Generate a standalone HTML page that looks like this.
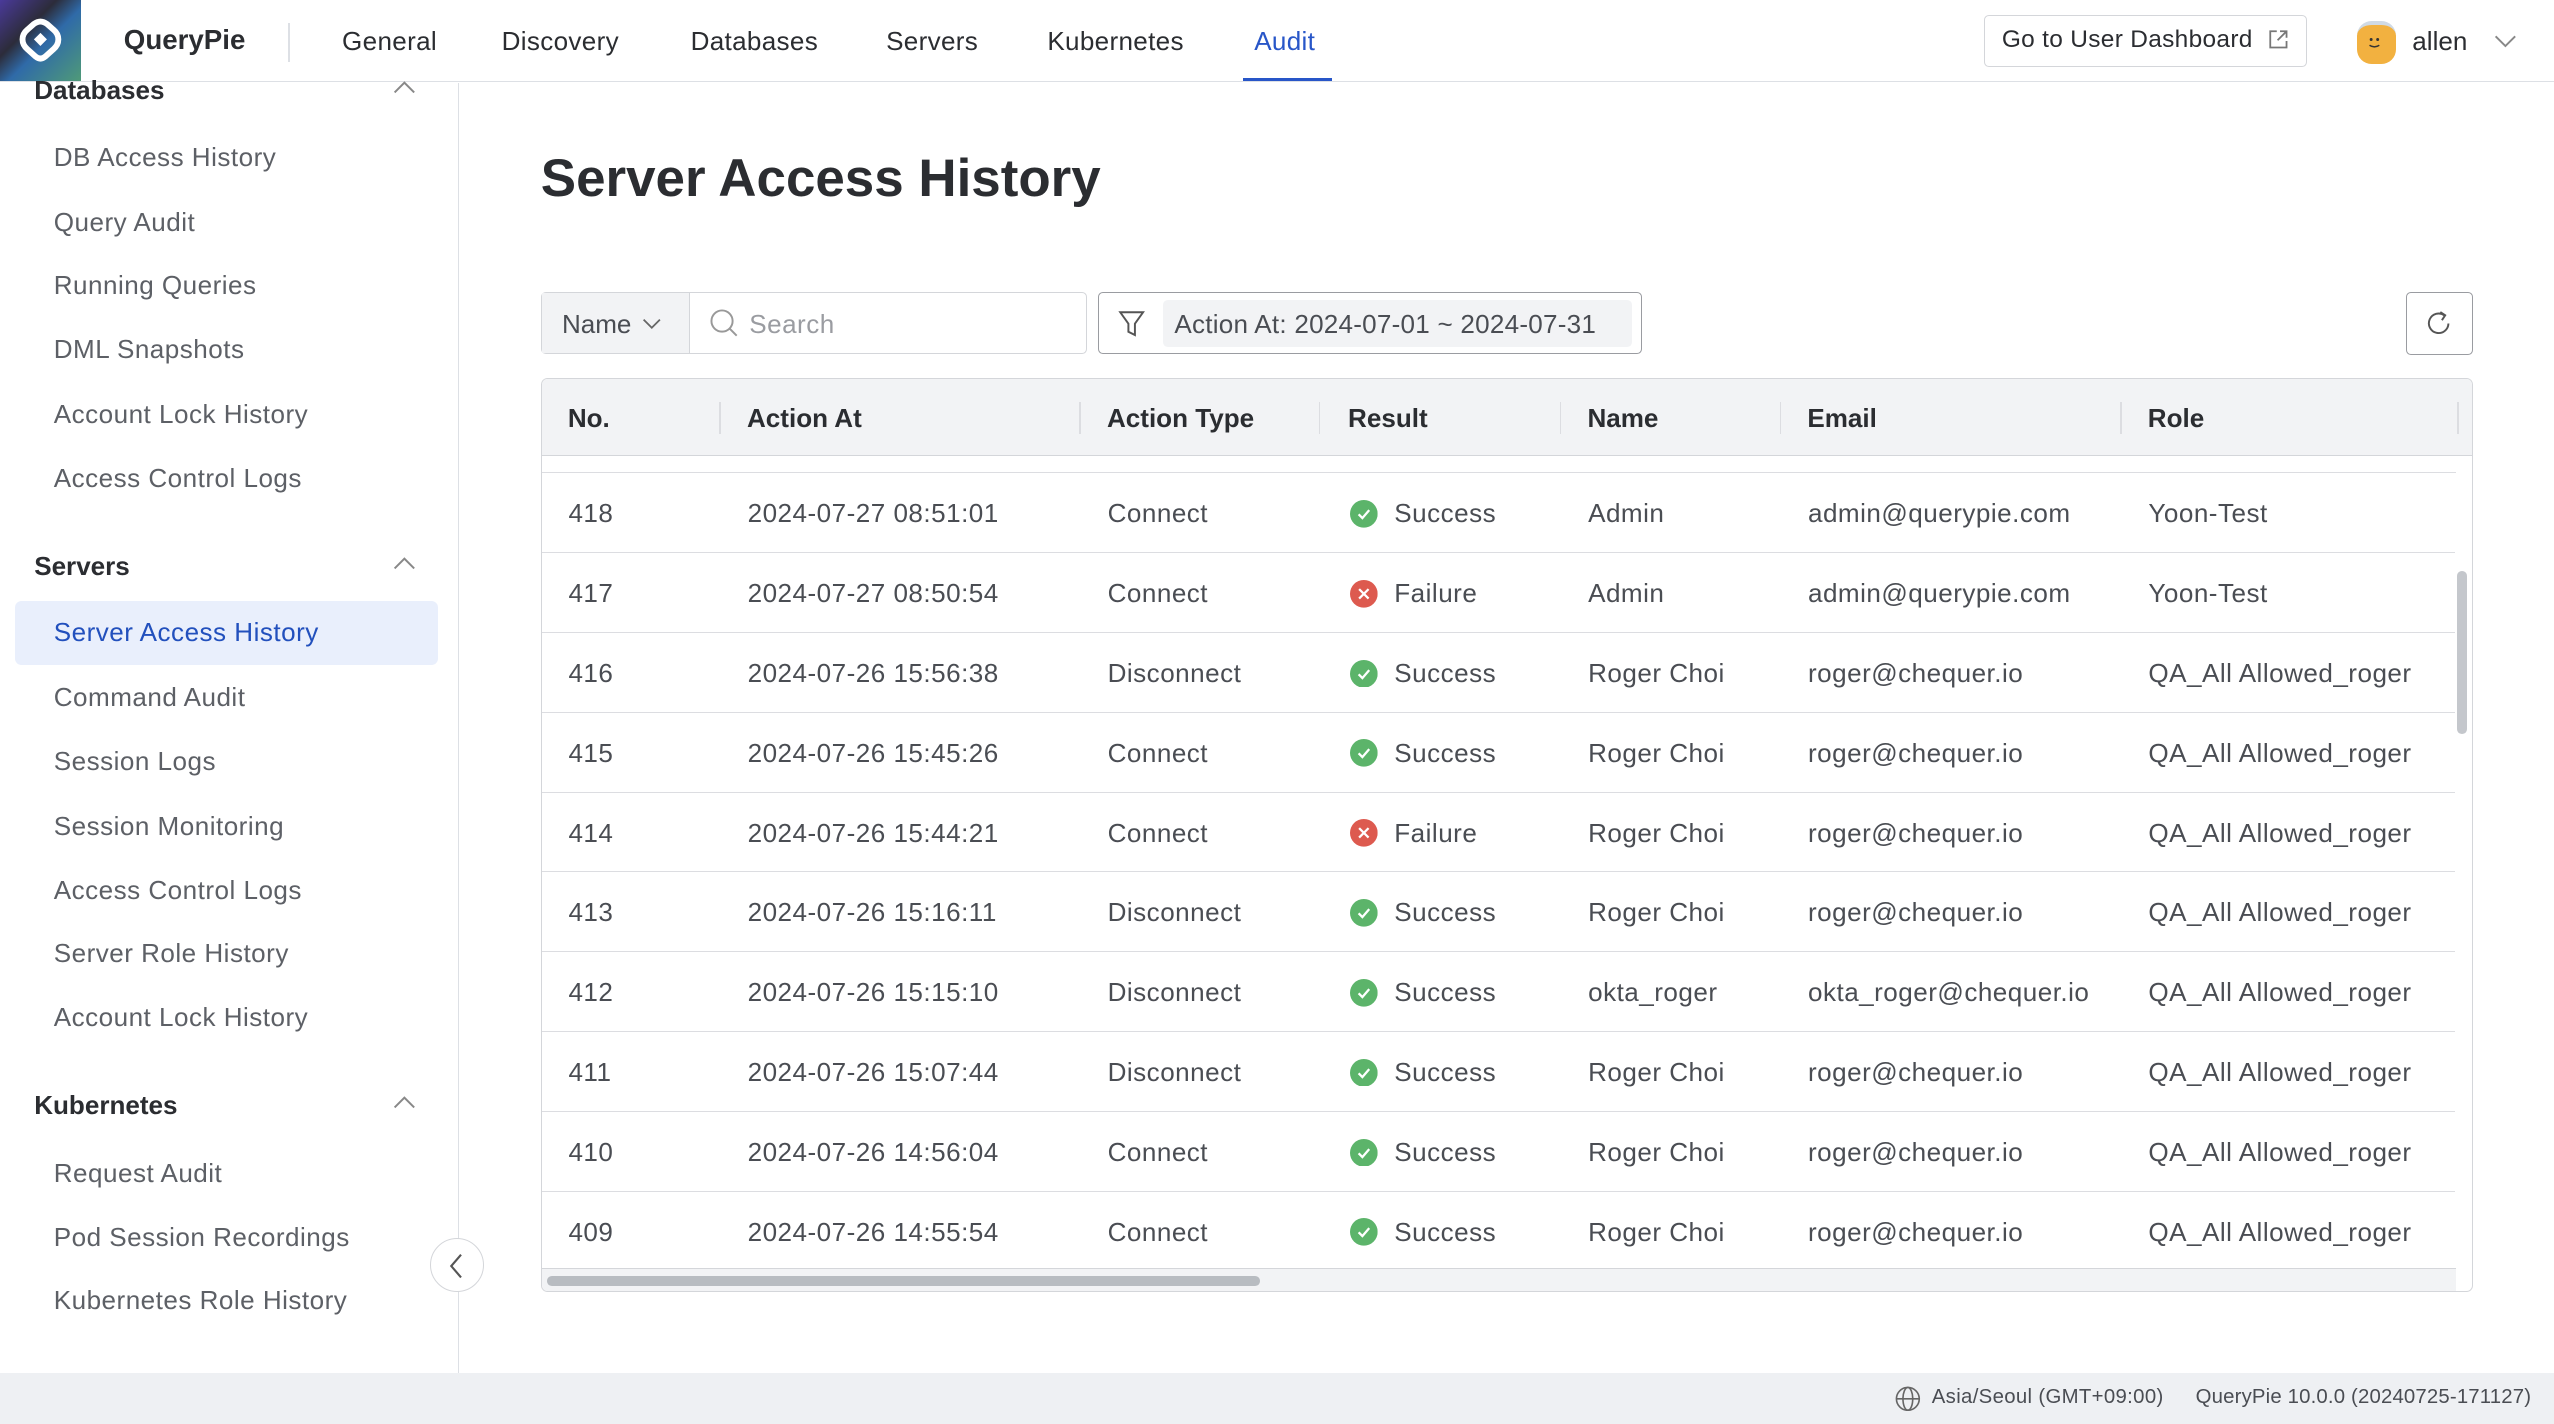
<!DOCTYPE html>
<html><head><meta charset="utf-8">
<style>
html,body{margin:0;padding:0;background:#fff;overflow:hidden}
#w{position:relative;width:1568px;height:874px;zoom:1.62883;font-family:"Liberation Sans",sans-serif;color:#2b2d31;overflow:hidden}
.a{position:absolute;white-space:nowrap}
.nav{top:16px;font-size:16px;color:#2b2d31;letter-spacing:0.2px}
.side{left:33px;font-size:16px;color:#5d6066;letter-spacing:0.3px}
.sh{left:21px;font-size:16px;font-weight:bold;color:#2b2d31}
.row{position:absolute;left:333px;width:1174px;height:48px;border-bottom:1px solid #dcdde1;font-size:16px;color:#4a4d53;letter-spacing:0.3px}
.row span{position:absolute;top:15px;white-space:nowrap}
.ic{position:absolute;top:16px;left:496px;width:17px;height:17px}
.th{position:absolute;top:15px;font-size:16px;font-weight:bold;color:#2b2d31}
.sep{position:absolute;top:14px;width:1px;height:20px;background:#dcdde1}
</style></head><body><div id="w">
<svg width="0" height="0" style="position:absolute"><defs>
<symbol id="ok" viewBox="0 0 17 17"><circle cx="8.5" cy="8.5" r="8.5" fill="#5cb46a"/><path d="M5.3 8.8L7.6 11.1L11.8 6.2" fill="none" stroke="#fff" stroke-width="1.4"/></symbol>
<symbol id="bad" viewBox="0 0 17 17"><circle cx="8.5" cy="8.5" r="8.5" fill="#dd5a4f"/><path d="M5.6 5.6L11.4 11.4M11.4 5.6L5.6 11.4" stroke="#fff" stroke-width="1.4"/></symbol>
</defs></svg>
<!-- header -->
<div class="a" style="left:0;top:0;width:1568px;height:50px;border-bottom:1px solid #dde0e5;background:#fff"></div>
<div class="a" style="left:0;top:0;width:50px;height:50px;background:linear-gradient(135deg,#4a3a9a 0%,#2c2c3a 35%,#2f6aa8 55%,#4f9a78 100%)"></div>
<svg class="a" style="left:10px;top:9px" width="30" height="32" viewBox="0 0 30 32"><path d="M15 4 Q17 4 19 5.5 L23 9 Q26 11.5 26 15 Q26 18.5 23 21 L18 25.5 Q15 28 12 25.5 L7 21 Q4 18.5 4 15 Q4 11.5 7 9 L11 5.5 Q13 4 15 4 Z" fill="none" stroke="#fff" stroke-width="3.6"/><path d="M15 11 L19 15 L15 19 L11 15 Z" fill="#fff"/></svg>
<div class="a" style="left:76px;top:15px;font-size:17px;font-weight:bold">QueryPie</div>
<div class="a" style="left:177px;top:14px;width:1px;height:24px;background:#dde0e5"></div>
<div class="a nav" style="left:210px">General</div>
<div class="a nav" style="left:308px">Discovery</div>
<div class="a nav" style="left:424px">Databases</div>
<div class="a nav" style="left:544px">Servers</div>
<div class="a nav" style="left:643px">Kubernetes</div>
<div class="a nav" style="left:770px;color:#2856c8">Audit</div>
<div class="a" style="left:763px;top:48px;width:55px;height:2px;background:#2856c8"></div>
<div class="a" style="left:1218px;top:9px;width:197px;height:31px;border:1px solid #d4d6da;border-radius:3px"></div>
<div class="a" style="left:1229px;top:16px;font-size:15px;color:#2b2d31;letter-spacing:0.2px">Go to User Dashboard</div>
<svg class="a" style="left:1392px;top:17px" width="14" height="14" viewBox="0 0 14 14"><path d="M6 2H2V12H12V8M8 2H12V6M12 2L6.5 7.5" fill="none" stroke="#777" stroke-width="1.1"/></svg>
<div class="a" style="left:1447px;top:13px;width:24px;height:26px;border-radius:9px;background:#f2b140;border-top:3px solid #d0dae5;box-sizing:border-box"></div>
<svg class="a" style="left:1451px;top:20px" width="14" height="12"><circle cx="5" cy="4" r="0.9" fill="#333"/><circle cx="9" cy="4" r="0.9" fill="#333"/><path d="M4 7.5Q7 9.5 10 7.5" fill="none" stroke="#333" stroke-width="0.9"/></svg>
<div class="a" style="left:1481px;top:16px;font-size:16px">allen</div>
<svg class="a" style="left:1531px;top:20px" width="14" height="10" viewBox="0 0 14 10"><path d="M1 2L7 8L13 2" fill="none" stroke="#888" stroke-width="1.2"/></svg>
<!-- sidebar -->
<div class="a" style="left:281px;top:51px;width:1px;height:792px;background:#dde0e5"></div>
<div class="a sh" style="top:46px">Databases</div>
<svg class="a" style="left:241px;top:50px" width="14" height="9"><path d="M1 7L7 1L13 7" fill="none" stroke="#888" stroke-width="1.2"/></svg>
<div class="a side" style="top:87px">DB Access History</div>
<div class="a side" style="top:127px">Query Audit</div>
<div class="a side" style="top:166px">Running Queries</div>
<div class="a side" style="top:205px">DML Snapshots</div>
<div class="a side" style="top:245px">Account Lock History</div>
<div class="a side" style="top:284px">Access Control Logs</div>
<div class="a sh" style="top:338px">Servers</div>
<svg class="a" style="left:241px;top:342px" width="14" height="9"><path d="M1 7L7 1L13 7" fill="none" stroke="#888" stroke-width="1.2"/></svg>
<div class="a" style="left:9px;top:369px;width:260px;height:39px;border-radius:4px;background:#e9effc"></div>
<div class="a side" style="top:379px;color:#2250bd">Server Access History</div>
<div class="a side" style="top:419px">Command Audit</div>
<div class="a side" style="top:458px">Session Logs</div>
<div class="a side" style="top:498px">Session Monitoring</div>
<div class="a side" style="top:537px">Access Control Logs</div>
<div class="a side" style="top:576px">Server Role History</div>
<div class="a side" style="top:615px">Account Lock History</div>
<div class="a sh" style="top:669px">Kubernetes</div>
<svg class="a" style="left:241px;top:673px" width="14" height="9"><path d="M1 7L7 1L13 7" fill="none" stroke="#888" stroke-width="1.2"/></svg>
<div class="a side" style="top:711px">Request Audit</div>
<div class="a side" style="top:750px">Pod Session Recordings</div>
<div class="a side" style="top:789px">Kubernetes Role History</div>
<div class="a" style="left:264px;top:760px;width:32px;height:32px;border-radius:50%;border:1px solid #d4d6da;background:#fff"></div>
<svg class="a" style="left:275px;top:769px" width="10" height="16"><path d="M8 1L2 8L8 15" fill="none" stroke="#555" stroke-width="1.3"/></svg>
<!-- main -->
<div class="a" style="left:332px;top:91px;font-size:32.5px;font-weight:bold;color:#2b2d31">Server Access History</div>
<div class="a" style="left:332px;top:179px;width:334px;height:37px;border:1px solid #d4d6da;border-radius:3px"></div>
<div class="a" style="left:333px;top:180px;width:90px;height:37px;background:#f2f3f5;border-right:1px solid #d4d6da"></div>
<div class="a" style="left:345px;top:190px;font-size:16px;color:#4a4d53">Name</div>
<svg class="a" style="left:394px;top:195px" width="12" height="8"><path d="M1 1L6 6L11 1" fill="none" stroke="#666" stroke-width="1.1"/></svg>
<svg class="a" style="left:435px;top:189px" width="19" height="19"><circle cx="8" cy="8" r="6.5" fill="none" stroke="#999" stroke-width="1.2"/><path d="M12.5 12.5L17 17" stroke="#999" stroke-width="1.2"/></svg>
<div class="a" style="left:460px;top:190px;font-size:16px;color:#9a9ca1;letter-spacing:0.3px">Search</div>
<div class="a" style="left:674px;top:179px;width:333px;height:37px;border:1px solid #9a9ca1;border-radius:3px"></div>
<svg class="a" style="left:686px;top:190px" width="18" height="18"><path d="M2 2H16L11 9V16L7 14V9Z" fill="none" stroke="#555" stroke-width="1.2"/></svg>
<div class="a" style="left:714px;top:184px;width:288px;height:29px;border-radius:3px;background:#f2f3f5"></div>
<div class="a" style="left:721px;top:190px;font-size:16px;color:#4a4d53;letter-spacing:0.15px">Action At: 2024-07-01 ~ 2024-07-31</div>
<div class="a" style="left:1477px;top:179px;width:40px;height:38px;border:1px solid #9a9ca1;border-radius:3px"></div>
<svg class="a" style="left:1488px;top:189px" width="19" height="19"><path d="M15 9.5A6 6 0 1 1 12.5 4.5" fill="none" stroke="#555" stroke-width="1.2"/><path d="M10 2.5L13 4.5L11 7.5" fill="none" stroke="#555" stroke-width="1.2"/></svg>
<!-- table -->
<div class="a" style="left:332px;top:232px;width:1185px;height:560px;border:1px solid #d4d6da;border-radius:4px;overflow:hidden">
<div style="position:absolute;left:0;top:0;width:1185px;height:47px;background:#f2f3f5;border-bottom:1px solid #d4d6da"></div>
<div class="th" style="left:16px">No.</div><div class="sep" style="left:109px"></div>
<div class="th" style="left:126px">Action At</div><div class="sep" style="left:330px"></div>
<div class="th" style="left:347px">Action Type</div><div class="sep" style="left:477px"></div>
<div class="th" style="left:495px">Result</div><div class="sep" style="left:625px"></div>
<div class="th" style="left:642px">Name</div><div class="sep" style="left:760px"></div>
<div class="th" style="left:777px">Email</div><div class="sep" style="left:969px"></div>
<div class="th" style="left:986px">Role</div><div class="sep" style="left:1176px"></div>
<div style="position:absolute;left:0;top:57px;width:1175px;height:1px;background:#dcdde1"></div>
<div style="position:absolute;left:1176px;top:118px;width:6px;height:100px;border-radius:3px;background:#c4c7cc"></div>
<div style="position:absolute;left:0;top:546px;width:1175px;height:14px;background:#f2f3f5;border-top:1px solid #d4d6da"></div>
<div style="position:absolute;left:3px;top:551px;width:438px;height:6px;border-radius:3px;background:#b8bcc1"></div>
</div>
<div class="row" style="top:291px"><span style="left:16px">418</span><span style="left:126px">2024-07-27 08:51:01</span><span style="left:347px">Connect</span><svg class="ic"><use href="#ok"/></svg><span style="left:523px">Success</span><span style="left:642px">Admin</span><span style="left:777px">admin@querypie.com</span><span style="left:986px">Yoon-Test</span></div>
<div class="row" style="top:340px"><span style="left:16px">417</span><span style="left:126px">2024-07-27 08:50:54</span><span style="left:347px">Connect</span><svg class="ic"><use href="#bad"/></svg><span style="left:523px">Failure</span><span style="left:642px">Admin</span><span style="left:777px">admin@querypie.com</span><span style="left:986px">Yoon-Test</span></div>
<div class="row" style="top:389px"><span style="left:16px">416</span><span style="left:126px">2024-07-26 15:56:38</span><span style="left:347px">Disconnect</span><svg class="ic"><use href="#ok"/></svg><span style="left:523px">Success</span><span style="left:642px">Roger Choi</span><span style="left:777px">roger@chequer.io</span><span style="left:986px">QA_All Allowed_roger</span></div>
<div class="row" style="top:438px"><span style="left:16px">415</span><span style="left:126px">2024-07-26 15:45:26</span><span style="left:347px">Connect</span><svg class="ic"><use href="#ok"/></svg><span style="left:523px">Success</span><span style="left:642px">Roger Choi</span><span style="left:777px">roger@chequer.io</span><span style="left:986px">QA_All Allowed_roger</span></div>
<div class="row" style="top:487px"><span style="left:16px">414</span><span style="left:126px">2024-07-26 15:44:21</span><span style="left:347px">Connect</span><svg class="ic"><use href="#bad"/></svg><span style="left:523px">Failure</span><span style="left:642px">Roger Choi</span><span style="left:777px">roger@chequer.io</span><span style="left:986px">QA_All Allowed_roger</span></div>
<div class="row" style="top:536px"><span style="left:16px">413</span><span style="left:126px">2024-07-26 15:16:11</span><span style="left:347px">Disconnect</span><svg class="ic"><use href="#ok"/></svg><span style="left:523px">Success</span><span style="left:642px">Roger Choi</span><span style="left:777px">roger@chequer.io</span><span style="left:986px">QA_All Allowed_roger</span></div>
<div class="row" style="top:585px"><span style="left:16px">412</span><span style="left:126px">2024-07-26 15:15:10</span><span style="left:347px">Disconnect</span><svg class="ic"><use href="#ok"/></svg><span style="left:523px">Success</span><span style="left:642px">okta_roger</span><span style="left:777px">okta_roger@chequer.io</span><span style="left:986px">QA_All Allowed_roger</span></div>
<div class="row" style="top:634px"><span style="left:16px">411</span><span style="left:126px">2024-07-26 15:07:44</span><span style="left:347px">Disconnect</span><svg class="ic"><use href="#ok"/></svg><span style="left:523px">Success</span><span style="left:642px">Roger Choi</span><span style="left:777px">roger@chequer.io</span><span style="left:986px">QA_All Allowed_roger</span></div>
<div class="row" style="top:683px"><span style="left:16px">410</span><span style="left:126px">2024-07-26 14:56:04</span><span style="left:347px">Connect</span><svg class="ic"><use href="#ok"/></svg><span style="left:523px">Success</span><span style="left:642px">Roger Choi</span><span style="left:777px">roger@chequer.io</span><span style="left:986px">QA_All Allowed_roger</span></div>
<div class="row" style="top:732px;border-bottom:none"><span style="left:16px">409</span><span style="left:126px">2024-07-26 14:55:54</span><span style="left:347px">Connect</span><svg class="ic"><use href="#ok"/></svg><span style="left:523px">Success</span><span style="left:642px">Roger Choi</span><span style="left:777px">roger@chequer.io</span><span style="left:986px">QA_All Allowed_roger</span></div>
<!-- footer -->
<div class="a" style="left:0;top:843px;width:1568px;height:31px;background:#eef0f3"></div>
<svg class="a" style="left:1163px;top:850px" width="17" height="17"><circle cx="8.5" cy="8.5" r="7" fill="none" stroke="#666" stroke-width="1"/><ellipse cx="8.5" cy="8.5" rx="3" ry="7" fill="none" stroke="#666" stroke-width="1"/><path d="M1.5 8.5H15.5" stroke="#666" stroke-width="1"/></svg>
<div class="a" style="left:1186px;top:851px;font-size:12.5px;color:#4a4d53;letter-spacing:0.2px">Asia/Seoul (GMT+09:00)</div>
<div class="a" style="left:1348px;top:851px;font-size:12.5px;color:#4a4d53;letter-spacing:0.1px">QueryPie 10.0.0 (20240725-171127)</div>
</div></body></html>
